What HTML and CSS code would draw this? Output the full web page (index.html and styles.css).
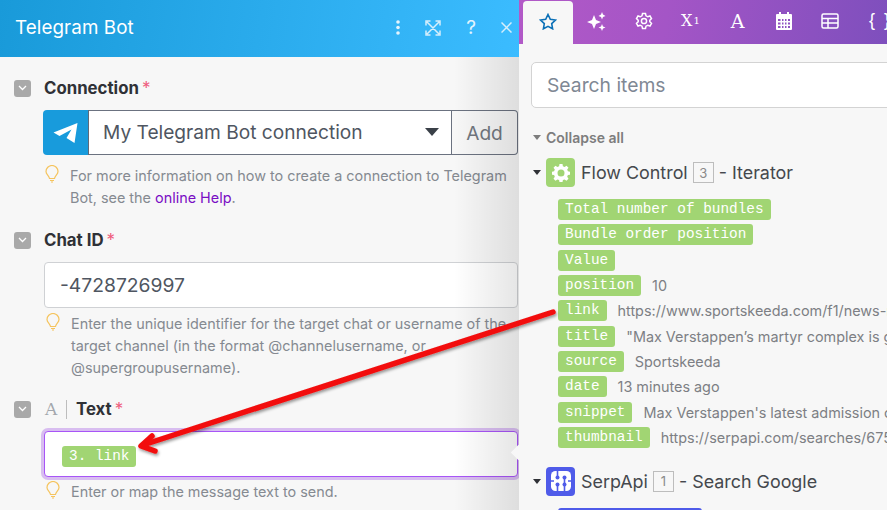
FILE: index.html
```html
<!DOCTYPE html>
<html lang="en">
<head>
<meta charset="utf-8">
<title>Telegram Bot</title>
<link rel="stylesheet" href="styles.css">
</head>
<body>
<div class="app">
  <section class="panel">
    <header class="head">
      <h1 class="head-title">Telegram Bot</h1>
      <div class="head-tools">
        <svg class="tool tool-dots" width="6" height="15" viewBox="0 0 6 15"><circle cx="3" cy="2" r="1.800"/><circle cx="3" cy="7.500" r="1.800"/><circle cx="3" cy="13" r="1.800"/></svg>
        <svg class="tool tool-line tool-expand" width="16" height="16" viewBox="0 0 16 16"><path d="M1 5.500V1h4.500M10.500 1H15v4.500M15 10.500V15h-4.500M5.500 15H1v-4.500M2 2l12 12M14 2L2 14"/></svg>
        <span class="tool-q">?</span>
        <svg class="tool tool-line tool-close" width="11" height="11" viewBox="0 0 11 11"><path d="M.5.500l10 10M10.500.500l-10 10"/></svg>
      </div>
    </header>
    <div class="form">
      <div class="field field-conn">
        <div class="label-row"><span class="toggle"><svg width="9" height="6" viewBox="0 0 9 6"><path d="M1 1l3.500 3.500L8 1"/></svg></span><span class="label">Connection</span><span class="req">*</span></div>
        <div class="conn">
          <span class="tg"><svg width="26" height="22" viewBox="0 0 26 22"><path fill="#fff" d="M0.500 10.500L24.500 1 21.500 21 13.500 16 18.500 7.500 6.500 14Z"/></svg></span>
          <span class="conn-name">My Telegram Bot connection<i class="caret"></i></span>
          <span class="conn-add">Add</span>
        </div>
        <div class="hint"><svg class="bulb" width="14" height="18" viewBox="0 0 14 18"><path d="M4.500 13.500C4 10.500 1 9.500 1 6.500a6 6 0 0 1 12 0c0 3-3 4-3.500 7zM5 15.500h4M6 17h2"/></svg><p>For more information on how to create a connection to Telegram Bot, see the <a class="help">online Help</a>.</p></div>
      </div>
      <div class="field field-chat">
        <div class="label-row"><span class="toggle"><svg width="9" height="6" viewBox="0 0 9 6"><path d="M1 1l3.500 3.500L8 1"/></svg></span><span class="label">Chat ID</span><span class="req">*</span></div>
        <div class="input input-chat">-4728726997</div>
        <div class="hint"><svg class="bulb" width="14" height="18" viewBox="0 0 14 18"><path d="M4.500 13.500C4 10.500 1 9.500 1 6.500a6 6 0 0 1 12 0c0 3-3 4-3.500 7zM5 15.500h4M6 17h2"/></svg><p>Enter the unique identifier for the target chat or username of the target channel (in the format @channelusername, or @supergroupusername).</p></div>
      </div>
      <div class="field field-text">
        <div class="label-row"><span class="toggle"><svg width="9" height="6" viewBox="0 0 9 6"><path d="M1 1l3.500 3.500L8 1"/></svg></span><span class="type-a">A</span><span class="sep"></span><span class="label">Text</span><span class="req">*</span></div>
        <div class="input input-text"><span class="pill pill-in">3. link</span></div>
        <div class="hint"><svg class="bulb" width="14" height="18" viewBox="0 0 14 18"><path d="M4.500 13.500C4 10.500 1 9.500 1 6.500a6 6 0 0 1 12 0c0 3-3 4-3.500 7zM5 15.500h4M6 17h2"/></svg><p>Enter or map the message text to send.</p></div>
      </div>
    </div>
  </section>
  <aside class="picker">
    <nav class="tabs">
      <span class="tab tab-on"><svg width="18" height="17" viewBox="0 0 18 17"><path d="M9 1.500l2.300 4.800 5.200.7-3.800 3.600.9 5.200L9 13.300l-4.600 2.500.9-5.200L1.500 7l5.200-.7z"/></svg></span>
      <span class="tab"><svg width="22" height="20" viewBox="0 0 22 20"><path fill="#fff" d="M8 4l2 5 5 2-5 2-2 5-2-5-5-2 5-2zM16 1l1 2.500L19.500 5 17 6l-1 2.500L15 6l-2.500-1L15 3.500zM16 13l1 2.500 2.500 1-2.500 1-1 2.500-1-2.500-2.500-1 2.500-1z"/></svg></span>
      <span class="tab"><svg class="stroke" width="18" height="18" viewBox="0 0 18 18"><path d="M7.500 1.500h3l.5 2.300 1.800 1 2.200-.8 1.500 2.600-1.700 1.600v1.600l1.700 1.600-1.500 2.600-2.200-.8-1.800 1-.5 2.300h-3l-.5-2.300-1.800-1-2.200.8-1.500-2.600 1.700-1.600V8.200L1.500 6.600 3 4l2.200.8 1.800-1z"/><circle cx="9" cy="9" r="2.600"/></svg></span>
      <span class="tab tab-x">X<sup>1</sup></span>
      <span class="tab tab-a">A</span>
      <span class="tab tab-narrow"><svg width="16" height="18" viewBox="0 0 16 18"><path fill="#fff" fill-rule="evenodd" d="M3 0h2v2h6V0h2v2h2a1 1 0 0 1 1 1v14a1 1 0 0 1-1 1H1a1 1 0 0 1-1-1V3a1 1 0 0 1 1-1h2zM2 7v2h2.500V7zm4 0v2h1.500V7zm3 0v2h1.500V7zm3 0v2h2V7zM2 10.500v2h2.500v-2zm4 0v2h1.500v-2zm3 0v2h1.500v-2zm3 0v2h2v-2zM2 14v2h2.500v-2zm4 0v2h1.500v-2zm3 0v2h1.500v-2zm3 0v2h2v-2z"/></svg></span>
      <span class="tab tab-narrow"><svg class="stroke" width="18" height="16" viewBox="0 0 18 16"><rect x="1" y="1" width="16" height="14" rx="1.500"/><path d="M1 5.500h16M1 10h16M7 5.500V15" /></svg></span>
      <span class="tab tab-b">{ }</span>
    </nav>
    <div class="picker-body">
      <div class="search">Search items</div>
      <div class="collapse"><i class="tri"></i>Collapse all</div>
      <div class="module">
        <div class="mod-head"><i class="tri tri-dark"></i><span class="mod-ico mod-green"><svg width="18" height="18" viewBox="0 0 18 18"><path fill="#fff" fill-rule="evenodd" d="M7.500 0h3l.4 2.300 1.700.7L14.500 1.700l2 2-1.300 1.900.7 1.700 2.100.4v3l-2.100.4-.7 1.700 1.300 1.900-2 2-1.900-1.300-1.700.7-.4 2.100h-3l-.4-2.100-1.700-.7-1.900 1.300-2-2 1.300-1.900-.7-1.700L0 10.700v-3l2.100-.4.700-1.700L1.500 3.700l2-2L5.400 3l1.700-.7zM9 5.500a3.500 3.500 0 1 0 0 7 3.500 3.500 0 0 0 0-7z"/></svg></span><span class="mod-name">Flow Control</span><span class="num">3</span><span class="mod-name">- Iterator</span></div>
        <ul class="rows">
          <li class="row"><span class="pill">Total number of bundles</span></li>
          <li class="row"><span class="pill">Bundle order position</span></li>
          <li class="row"><span class="pill">Value</span></li>
          <li class="row"><span class="pill">position</span><span class="val">10</span></li>
          <li class="row"><span class="pill">link</span><span class="val">https://www.sportskeeda.com/f1/news-max-verstappen-martyr-complex</span></li>
          <li class="row"><span class="pill">title</span><span class="val">"Max Verstappen’s martyr complex is growing by the race"</span></li>
          <li class="row"><span class="pill">source</span><span class="val">Sportskeeda</span></li>
          <li class="row"><span class="pill">date</span><span class="val">13 minutes ago</span></li>
          <li class="row"><span class="pill">snippet</span><span class="val">Max Verstappen's latest admission on the championship fight</span></li>
          <li class="row"><span class="pill">thumbnail</span><span class="val">https://serpapi.com/searches/675abc123def456/images</span></li>
        </ul>
      </div>
      <div class="module module-serp">
        <div class="mod-head"><i class="tri tri-dark"></i><span class="mod-ico mod-blue"><svg width="20" height="20" viewBox="0 0 20 20"><rect width="20" height="20" rx="4.500" fill="#fff"/><path fill="none" stroke="#4f5be9" stroke-width="1.600" d="M6.500 0v7M13.500 7v6M6.500 13v7M13.500 13v7M0 10h3M17 10h3"/><g fill="#4f5be9"><circle cx="6.500" cy="6.500" r="2"/><circle cx="13.500" cy="6.500" r="2"/><circle cx="6.500" cy="13.500" r="2"/><circle cx="13.500" cy="13.500" r="2"/></g></svg></span><span class="mod-name">SerpApi</span><span class="num">1</span><span class="mod-name">- Search Google</span></div>
        <div class="pill-blue"></div>
      </div>
    </div>
  </aside>
  <svg class="arrow" width="887" height="510" viewBox="0 0 887 510"><defs><filter id="shade" x="-5%" y="-5%" width="110%" height="115%"><feDropShadow dx="1" dy="2" stdDeviation="1.500" flood-color="#000" flood-opacity=".4"/></filter></defs><g filter="url(#shade)" fill="none" stroke="#f20d0d" stroke-linecap="round" stroke-linejoin="round"><path stroke-width="5.500" d="M553 312L146 444"/><path stroke-width="5.500" d="M152 436L141 446 155 451"/></g></svg>
</div>
</body>
</html>
```

FILE: styles.css
```css
* { box-sizing: border-box; }
html, body { margin: 0; padding: 0; }
body { width: 887px; height: 510px; overflow: hidden; font-family: Inter, "Liberation Sans", sans-serif; color: #34373c; background: #f7f7f7; }
.app { position: relative; display: flex; width: 887px; height: 510px; overflow: hidden; }

.panel { flex: 0 0 519px; width: 519px; height: 510px; background: #f7f7f7; }
.head { height: 57px; display: flex; align-items: center; justify-content: space-between; padding: 0 7px 2px 15px; background: linear-gradient(100deg, #199ad9 0, #2aabec 50%, #3bbcff 100%); }
.head-title { margin: 0; font-size: 18.800px; font-weight: 400; color: #fff; letter-spacing: .1px; }
.head-tools { display: flex; align-items: center; }
.tool { fill: #e4f4fd; }
.tool-line { fill: none; stroke: #d5eefc; stroke-width: 1.500; }
.tool-expand { margin-left: 24px; }
.tool-q { margin-left: 23px; width: 14px; font-size: 19px; color: #e4f4fd; line-height: 20px; text-align: center; }
.tool-close { margin-left: 23px; }

.form { position: relative; height: 453px; padding-left: 14px; }
.form::after { content: ""; position: absolute; right: 0; top: 0; bottom: 0; width: 65px; z-index: 1; pointer-events: none; background: linear-gradient(90deg, rgba(0,0,0,0), rgba(0,0,0,.1)); }
.field-conn { padding-top: 22px; }
.field-chat { padding-top: 22px; }
.field-text { padding-top: 21px; }
.label-row { display: flex; align-items: center; height: 18px; }
.toggle { flex: none; display: flex; align-items: center; justify-content: center; width: 17px; height: 17px; border-radius: 3px; background: #a9a9a9; }
.toggle svg { fill: none; stroke: #fff; stroke-width: 1.300; }
.label { margin-left: 13px; font-size: 16.800px; font-weight: 700; color: #2f3136; }
.req { margin-left: 3px; font-size: 17px; color: #ef5c7d; line-height: 16px; }
.type-a { margin-left: 14px; width: 13px; font-family: "DejaVu Serif", serif; font-size: 17px; line-height: 18px; color: #a3a7ad; }
.sep { width: 1px; height: 19px; margin: 0 9px 0 8px; background: #bdbdbd; }
.sep + .label { margin-left: 0; }

.conn { display: flex; width: 475px; height: 45px; margin: 13px 0 0 29px; border-radius: 4px; }
.tg { flex: none; width: 46px; display: flex; align-items: center; justify-content: center; background: #189bdc; border-radius: 4px 0 0 4px; border-right: 1px solid #5f6a78; }
.conn-name { flex: 1; display: flex; align-items: center; justify-content: space-between; padding: 0 12px 2px 14px; background: #fff; border: 1px solid #6b7280; border-width: 1px 1px 1px 0; font-size: 19.150px; color: #4f5661; }
.caret { width: 0; height: 0; border: 7px solid transparent; border-top: 8px solid #3a4048; border-bottom: 0; }
.conn-add { flex: none; width: 66px; display: flex; align-items: center; justify-content: center; border: 1px solid #6b7280; border-left: 0; border-radius: 0 4px 4px 0; font-size: 19.150px; color: #727780; }

.hint { display: flex; align-items: flex-start; margin: 10px 0 0 31px; }
.field-chat .hint { margin: 5px 0 0 32px; }
.field-text .hint { margin: 4px 0 0 32px; }
.bulb { flex: none; fill: none; stroke: #f5c45e; stroke-width: 1.200; }
.hint p { margin: 0 0 0 11px; width: 450px; font-size: 14.400px; line-height: 22px; color: #858a91; }
.help { color: #7a0ec4; }

.input { width: 474px; margin: 13px 0 0 30px; height: 46px; background: #fff; border: 1px solid #cfd1d4; border-radius: 4px; display: flex; align-items: center; padding-left: 15px; font-size: 19.300px; color: #4f5661; }
.input-text { height: 46px; padding: 5px 0 0 17px; border: 1px solid #a855f7; box-shadow: 0 0 0 3px #d8bdf0; position: relative; }
.input-text::after { content: ""; position: absolute; right: -7px; top: 15px; width: 11px; height: 11px; z-index: 2; background: #f7f7f7; transform: rotate(45deg); }

.pill { flex: none; display: inline-block; height: 21px; line-height: 20px; padding: 0 7px; border-radius: 3px; background: #a1d573; color: #fff; font-family: "Liberation Mono", monospace; font-size: 14.400px; white-space: nowrap; }

.picker { flex: none; width: 368px; height: 510px; background: #f7f7f7; position: relative; z-index: 2; }
.tabs { height: 44px; display: flex; padding-left: 4px; background: linear-gradient(100deg, #b259c7 0, #a455c6 40%, #7e4fbd 100%); }
.tab { flex: none; width: 47px; height: 44px; display: flex; align-items: center; justify-content: center; color: #fff; }
.tab svg { display: block; margin-bottom: 3px; }
.tab-narrow { width: 46px; }
.tab-on { width: 50px; height: 43px; margin-top: 1px; background: #f7f7f7; border-radius: 4px 4px 0 0; }
.tab-on svg { fill: none; stroke: #0b70b7; stroke-width: 1.600; }
.stroke { fill: none; stroke: #fff; stroke-width: 1.500; }
.tab-x { font-family: "DejaVu Serif", serif; font-size: 16px; padding-bottom: 3px; }
.tab-x sup { font-size: 10px; line-height: 0; margin-left: 1px; }
.tab-a { font-family: "DejaVu Serif", serif; font-size: 19px; padding-bottom: 3px; }
.tab-b { justify-content: flex-start; padding: 0 0 3px 16px; font-family: "Liberation Sans", sans-serif; font-size: 18px; letter-spacing: 2px; white-space: nowrap; }

.picker-body { padding: 18px 0 0 12px; }
.search { width: 400px; height: 46px; padding-left: 15px; display: flex; align-items: center; background: #fff; border: 1px solid #d3d3d3; border-radius: 5px; font-size: 19.300px; color: #7f8894; }
.collapse { display: flex; align-items: center; margin: 20px 0 0 2px; height: 18px; font-size: 14px; font-weight: 600; color: #7d7d7d; }
.tri { flex: none; width: 0; height: 0; margin-right: 5px; border: 4px solid transparent; border-top: 5px solid #7d7d7d; border-bottom: 0; }
.tri-dark { border-top-color: #2f3136; }
.mod-head { display: flex; align-items: center; height: 29px; font-size: 17.900px; color: #45484d; }
.module { margin: 12px 0 0 2px; }
.module-serp { margin-top: 19px; }
.mod-ico { flex: none; width: 29px; height: 29px; margin-right: 6px; border-radius: 4px; display: flex; align-items: center; justify-content: center; }
.mod-green { background: #a1d573; }
.mod-blue { background: #4f5be9; }
.num { margin: 0 5px; width: 21px; height: 21px; display: flex; align-items: center; justify-content: center; border: 1px solid #bdbdbd; font-size: 13px; color: #8a8a8a; }
.rows { list-style: none; margin: 12px 0 0 25px; padding: 0; }
.row { display: flex; align-items: center; height: 21px; margin-bottom: 4.330px; white-space: nowrap; }
.val { margin-left: 11px; font-size: 14.400px; color: #7d7f84; }
.pill-blue { margin: 12px 0 0 25px; width: 144px; height: 10px; background: #4f5be9; border-radius: 3px 3px 0 0; }

.arrow { position: absolute; left: 0; top: 0; z-index: 3; pointer-events: none; }
```
